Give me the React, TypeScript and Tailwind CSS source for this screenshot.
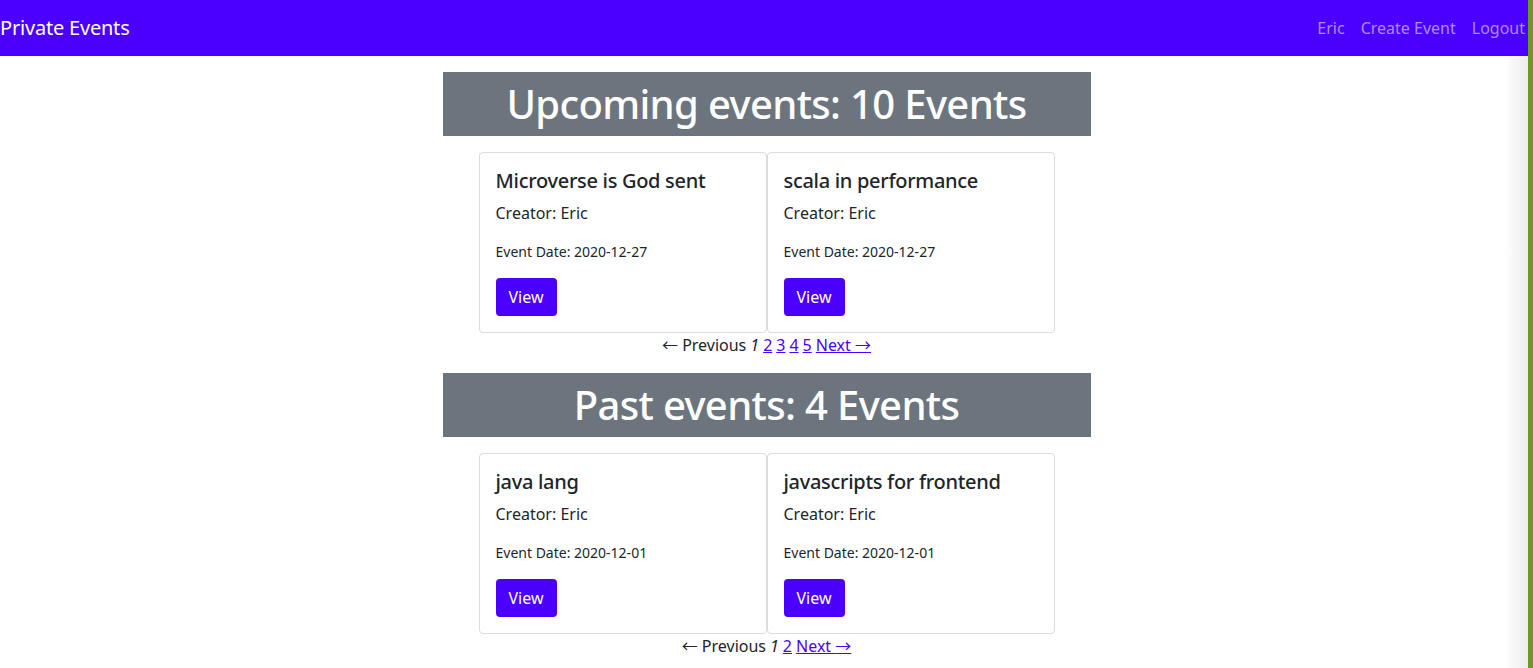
import React from "react";

interface EventItem {
  id: number;
  title: string;
  creator: string;
  date: string;
}

const upcoming: EventItem[] = [
  { id: 1, title: "Microverse is God sent", creator: "Eric", date: "2020-12-27" },
  { id: 2, title: "scala in performance", creator: "Eric", date: "2020-12-27" },
];

const past: EventItem[] = [
  { id: 3, title: "java lang", creator: "Eric", date: "2020-12-01" },
  { id: 4, title: "javascripts for frontend", creator: "Eric", date: "2020-12-01" },
];

const font = { fontFamily: '"Noto Sans", "Open Sans", sans-serif' };

function EventCard({ event }: { event: EventItem }) {
  return (
    <div className="w-[288px] border border-[#dcdcdc] rounded-[4px] bg-white p-4">
      <h5 className="text-[20px] leading-[24px] font-medium tracking-[-0.3px] text-[#212529] mb-2">{event.title}</h5>
      <p className="text-[16px] leading-[24px] text-[#212529] mb-4">Creator: {event.creator}</p>
      <p className="text-[14px] leading-[21px] text-[#212529] mb-4">Event Date: {event.date}</p>
      <button className="h-[38px] px-[13px] rounded-[4px] bg-[#4b00ff] text-white text-[16px]">View</button>
    </div>
  );
}

// thin full-width arrow glyph
function Arrow({ children }: { children: React.ReactNode }) {
  return <span className="font-['Noto_Sans_CJK_SC',sans-serif] leading-[0]">{children}</span>;
}

function Pagination({ pages }: { pages: number }) {
  const links = [];
  for (let i = 2; i <= pages; i++) {
    links.push(
      <a key={i} href="#" className="underline text-[#4b00ff]">
        {i}
      </a>
    );
  }
  return (
    <div className="flex justify-center gap-[4px] h-[24px] text-[16px] leading-[24px] text-[#212529]">
      <span>
        <Arrow>←</Arrow> Previous
      </span>
      <em>1</em>
      {links}
      <a href="#" className="underline text-[#4b00ff]">
        Next <Arrow>→</Arrow>
      </a>
    </div>
  );
}

function Section({ title, events, pages }: { title: string; events: EventItem[]; pages: number }) {
  return (
    <section className="flex flex-col items-center mb-4">
      <h1 className="w-[648px] h-[64px] bg-[#6c757d] text-white text-[40px] leading-[64px] font-medium tracking-[-0.65px] text-center mb-4">
        {title}
      </h1>
      <div className="flex">
        {events.map((e) => (
          <EventCard key={e.id} event={e} />
        ))}
      </div>
      <Pagination pages={pages} />
    </section>
  );
}

export default function App() {
  return (
    <div className="relative min-h-[668px] bg-white overflow-hidden" style={font}>
      <nav className="h-[56px] bg-[#4b00ff] flex items-center justify-between">
        <a href="#" className="text-white text-[20px] tracking-[-0.2px]">Private Events</a>
        <div className="flex text-[16px] text-[#ae8cff]">
          <a href="#" className="px-2">Eric</a>
          <a href="#" className="px-2">Create Event</a>
          <a href="#" className="px-2">Logout</a>
        </div>
      </nav>
      <main className="pt-4">
        <Section title="Upcoming events: 10 Events" events={upcoming} pages={5} />
        <Section title="Past events: 4 Events" events={past} pages={2} />
      </main>
      {/* window edge */}
      <div className="absolute top-[56px] right-[5px] bottom-0 w-[24px] bg-gradient-to-r from-white to-[#ececee]" />
      <div className="absolute top-0 right-0 bottom-0 w-[5px] bg-[#6a9a1f]" />
    </div>
  );
}
